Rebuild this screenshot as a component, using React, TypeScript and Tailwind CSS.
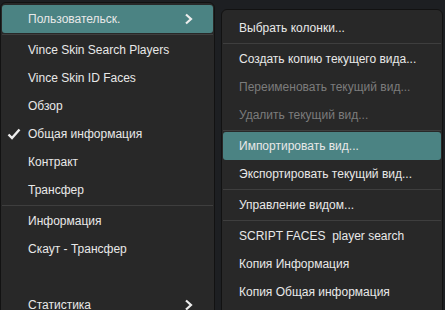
import React from 'react';

type Item = { label?: string; sep?: boolean; active?: boolean; checked?: boolean; sub?: boolean; disabled?: boolean };

const leftItems: Item[] = [
  { label: 'Пользовательск.', active: true, sub: true },
  { sep: true },
  { label: 'Vince Skin Search Players' },
  { label: 'Vince Skin ID Faces' },
  { label: 'Обзор' },
  { label: 'Общая информация', checked: true },
  { label: 'Контракт' },
  { label: 'Трансфер' },
  { sep: true },
  { label: 'Информация' },
  { label: 'Скаут - Трансфер' },
  { label: '' },
  { label: 'Статистика', sub: true },
];

const rightItems: Item[] = [
  { label: 'Выбрать колонки...' },
  { sep: true },
  { label: 'Создать копию текущего вида...' },
  { label: 'Переименовать текущий вид...', disabled: true },
  { label: 'Удалить текущий вид...', disabled: true },
  { sep: true },
  { label: 'Импортировать вид...', active: true },
  { label: 'Экспортировать текущий вид...' },
  { sep: true },
  { label: 'Управление видом...' },
  { sep: true },
  { label: 'SCRIPT FACES  player search' },
  { label: 'Копия Информация' },
  { label: 'Копия Общая информация' },
];

const Chevron = () => (
  <svg width="9" height="12" viewBox="0 0 9 12" className="absolute right-[20px] top-[8px]">
    <polyline points="2,1.5 7,6 2,10.5" fill="none" stroke="#ededed" strokeWidth="2.2" />
  </svg>
);

const Check = () => (
  <svg width="14" height="12" viewBox="0 0 14 12" className="absolute left-[5px] top-[8px]">
    <polyline points="1.5,6.5 5,10 12.5,1.5" fill="none" stroke="#ededed" strokeWidth="2.4" />
  </svg>
);

const Menu = ({ items, pad }: { items: Item[]; pad: string }) => (
  <>
    {items.map((it, i) =>
      it.sep ? (
        <div key={i} className="h-px my-px bg-[#3e3e3e]" />
      ) : (
        <div
          key={i}
          className={`relative h-[28px] flex items-center whitespace-pre ${pad} ${
            it.active ? 'bg-[#4b8383] rounded-[3px]' : ''
          } ${it.disabled ? 'text-[#7c7c7c]' : 'text-[#e8e8e8]'}`}
        >
          {it.checked && <Check />}
          <span>{it.label}</span>
          {it.sub && <Chevron />}
        </div>
      )
    )}
  </>
);

export default function App() {
  return (
    <div className="w-[445px] h-[310px] overflow-hidden bg-[#1d1f22] flex items-start font-['Liberation_Sans',Arial,sans-serif] text-[12px]">
      <div className="w-[215px] shrink-0 mt-[2px] rounded-md border border-[#121212] bg-[#282828] px-px pt-[2px] pb-4">
        <Menu items={leftItems} pad="pl-[26px]" />
      </div>
      <div className="w-[222px] shrink-0 ml-[6px] mt-[9px] rounded-md border border-[#121212] bg-[#282828] px-px pt-[4px] pb-4">
        <Menu items={rightItems} pad="pl-[16px]" />
      </div>
    </div>
  );
}
